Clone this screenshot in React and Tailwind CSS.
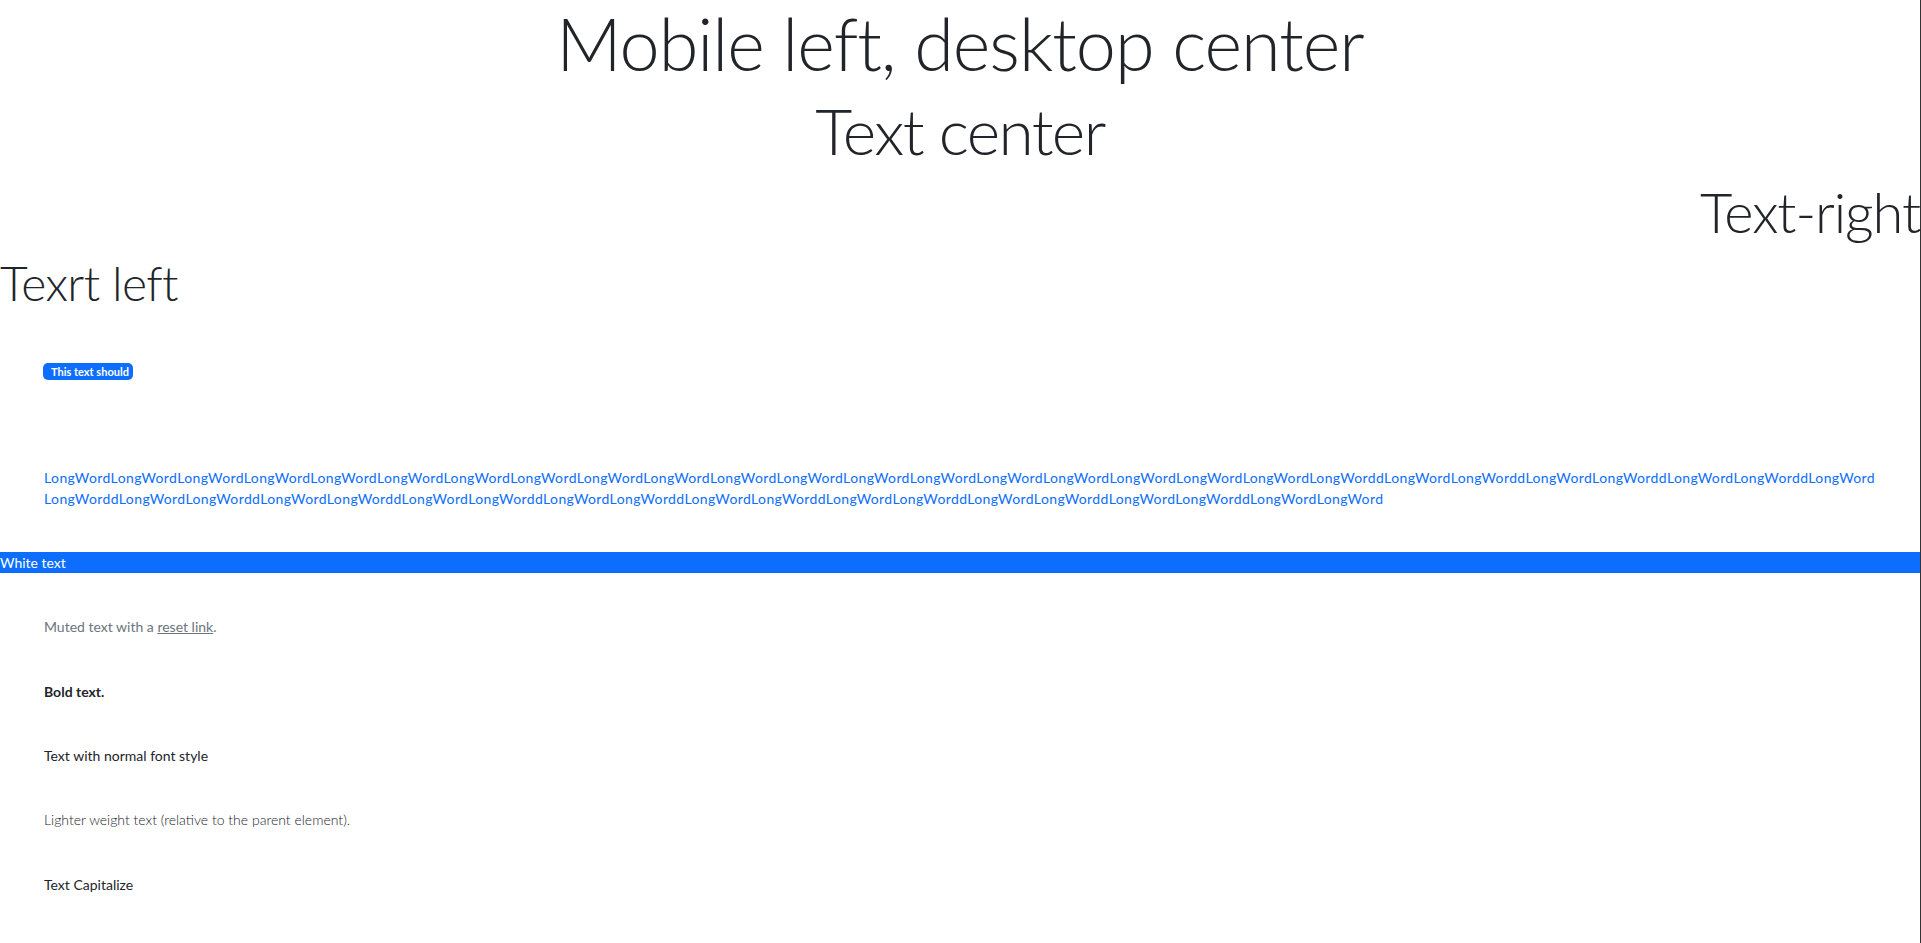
export default function App() {
  const line1 = "LongWord".repeat(19) + "LongWorddLongWord".repeat(4);
  const line2 = "LongWorddLongWord".repeat(9) + "LongWord";
  return (
    <div className="min-h-[943px] w-[1921px] border-r border-[#333333] bg-white text-[#212529] [font-family:Lato,sans-serif]">
      <h1 className="text-center text-[72px] font-light leading-[1.2] tracking-[-1px]">Mobile left, desktop center</h1>
      <h2 className="mt-[6.4px] text-center text-[64px] font-light leading-[1.2] tracking-[-1.6px]">Text center</h2>
      <h2 className="mt-[8.4px] text-right text-[56px] font-light leading-[1.2] tracking-[-1.1px]">Text-right</h2>
      <h2 className="mt-[9.1px] text-left text-[48px] font-light leading-[1.2] tracking-[-0.6px]">Texrt left</h2>

      <div className="mt-[51px] flex h-[17px] px-[43px]">
        <span className="block h-[17px] w-[90px] overflow-hidden whitespace-nowrap rounded-[5px] bg-[#0d6efd] pl-[8px] text-[11px] font-bold leading-[17px] text-white">
          This text should
        </span>
      </div>

      <div className="mt-[87px] px-[44px] text-[14px] leading-[21px] tracking-[0.38px] text-[#0d6efd]">
        <p className="whitespace-nowrap">{line1}</p>
        <p className="whitespace-nowrap">{line2}</p>
      </div>

      <div className="mt-[43px] h-[21px] bg-[#0d6efd] text-[14px] leading-[21px] text-white">White text</div>

      <div className="mt-[43.5px] flex flex-col gap-[43.3px] px-[44px] text-[14px] leading-[21px]">
        <p className="text-[#6c757d]">
          Muted text with a <a className="underline">reset link</a>.
        </p>
        <p className="font-bold">Bold text.</p>
        <p>Text with normal font style</p>
        <p className="font-light">Lighter weight text (relative to the parent element).</p>
        <p className="capitalize">Text Capitalize</p>
      </div>
    </div>
  );
}
